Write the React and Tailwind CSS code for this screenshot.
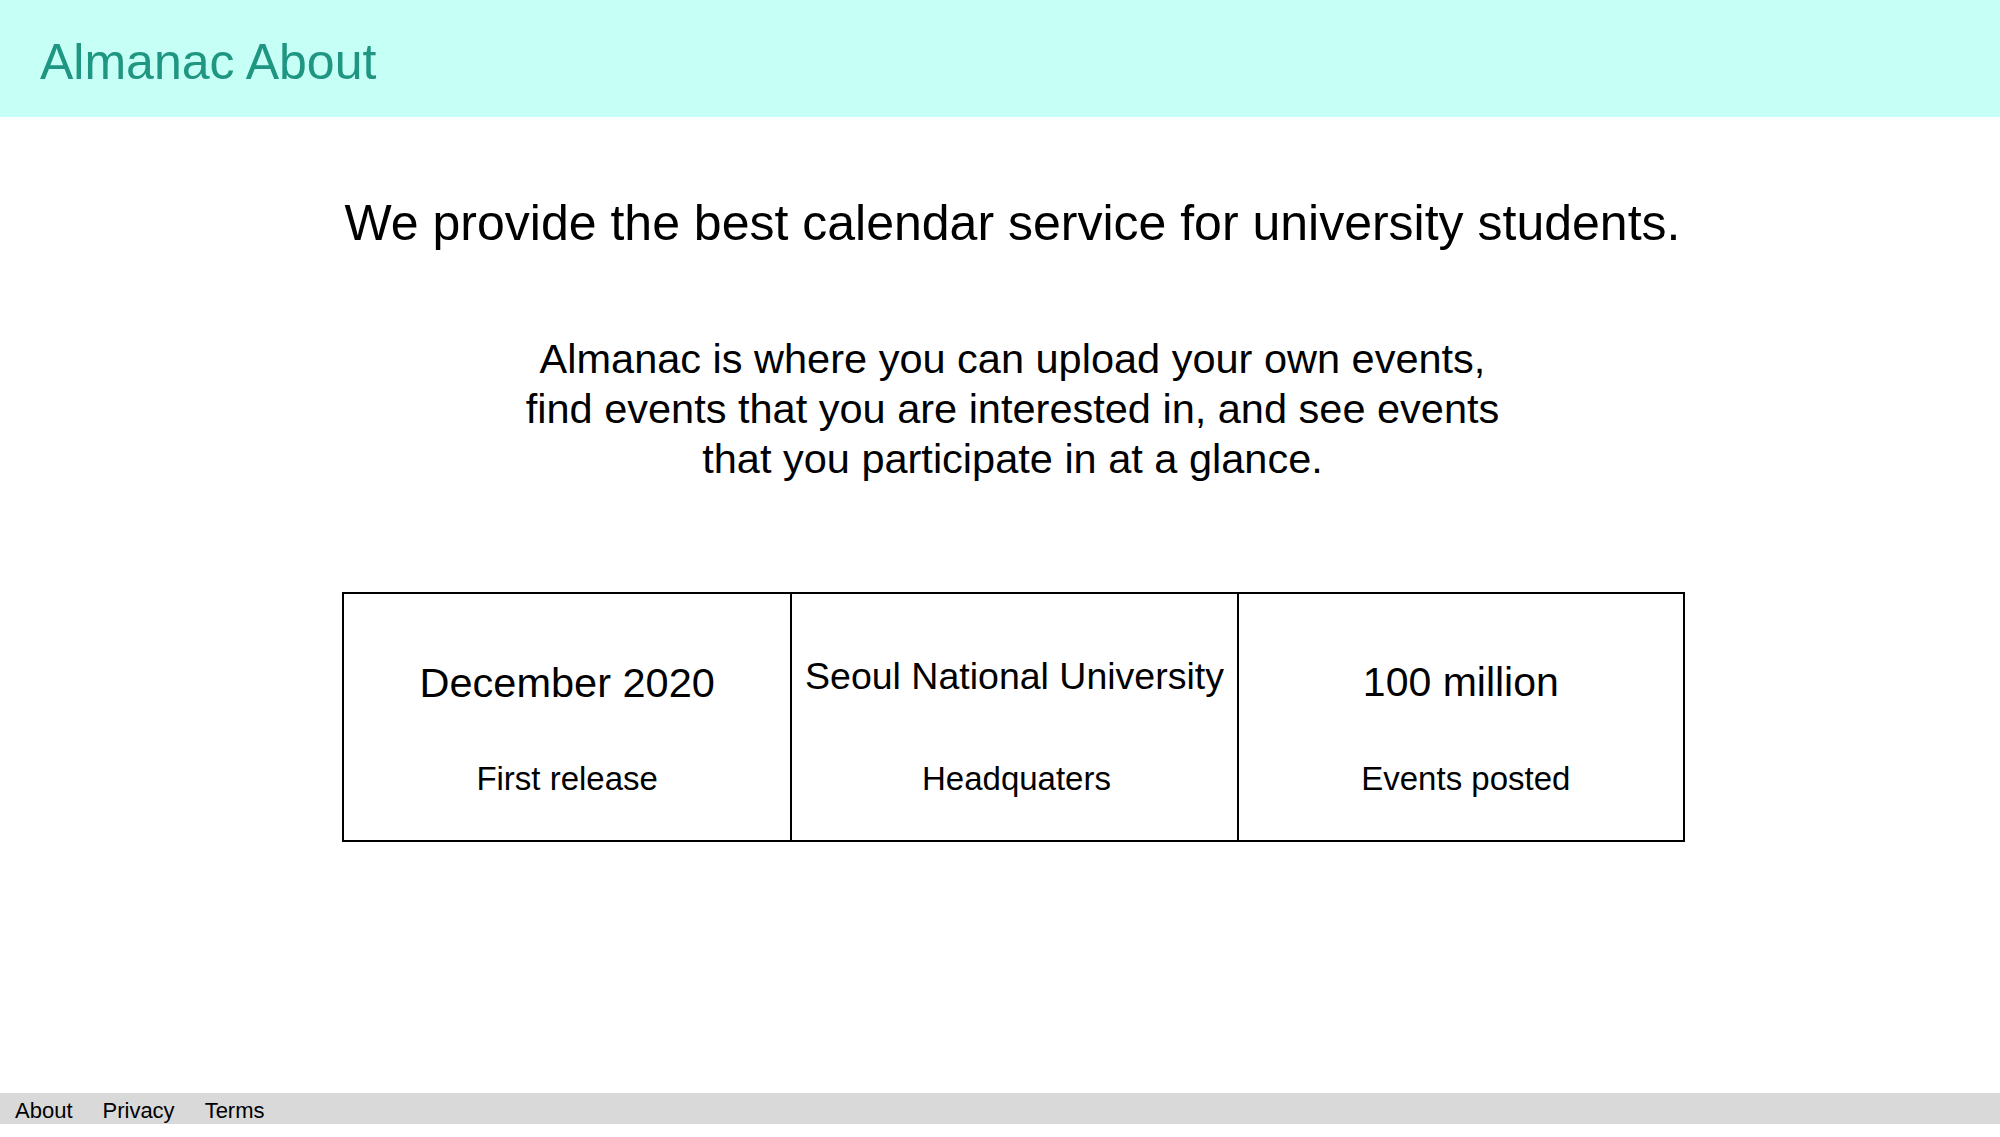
export default function App() {
  const stats = [
    { value: 'December 2020', label: 'First release', size: 'text-[41.5px] h-[49px]', pad: 'pt-[58px]', shift: '' },
    { value: 'Seoul National University', label: 'Headquaters', size: 'text-[37.5px] h-[53px]', pad: 'pt-[54px]', shift: 'ml-[4px]' },
    { value: '100 million', label: 'Events posted', size: 'text-[41px] h-[49px]', pad: 'pt-[58px]', shift: 'ml-[10px]' },
  ];

  return (
    <div className="h-[1137px] flex flex-col bg-white text-black font-['Liberation_Sans',Arial,sans-serif]">
      <header className="h-[117px] shrink-0 bg-[#c6fff5] pl-[40px] pt-[25px]">
        <h1 className="text-[50px] leading-normal text-[#1f9681]">Almanac About</h1>
      </header>

      <main className="flex-1 pl-[25px]">
        <div className="flex flex-col items-center">
          <h2 className="mt-[77px] text-[50px] leading-[58px]">
            We provide the best calendar service for university students.
          </h2>

          <p className="mt-[82px] text-[41.5px] leading-[50px] text-center">
            Almanac is where you can upload your own events,
            <br />
            find events that you are interested in, and see events
            <br />
            that you participate in at a glance.
          </p>

          <div className="mt-[108px] ml-[2px] w-[1343px] h-[250px] border-2 border-black grid grid-cols-3">
            {stats.map((s, i) => (
              <div
                key={s.label}
                className={`flex flex-col items-center ${s.pad} ${i > 0 ? 'border-l-2 border-black' : ''}`}
              >
                <div className={`leading-normal whitespace-nowrap ${s.size}`}>{s.value}</div>
                <div className={`mt-[53px] text-[33px] leading-normal ${s.shift}`}>{s.label}</div>
              </div>
            ))}
          </div>
        </div>
      </main>

      <footer className="h-[31px] shrink-0 bg-[#d9d9d9] flex gap-[30px] pl-[15px] pt-[1px] text-[22px] leading-normal mb-[13px]">
        <a href="#">About</a>
        <a href="#">Privacy</a>
        <a href="#">Terms</a>
      </footer>
    </div>
  );
}
